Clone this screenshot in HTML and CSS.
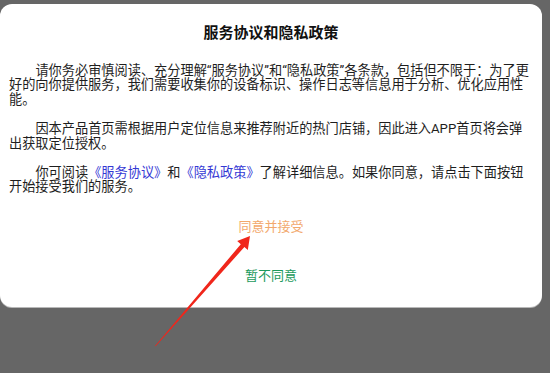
FILE: index.html
```html
<!DOCTYPE html>
<html lang="zh-CN">
<head>
<meta charset="utf-8">
<title>服务协议和隐私政策</title>
<link rel="stylesheet" href="styles.css">
</head>
<body>
<div class="dialog">
  <h1 class="title">服务协议和隐私政策</h1>
  <div class="content">
    <p class="para">请你务必审慎阅读、充分理解“服务协议”和“隐私政策”各条款，包括但不限于：为了更好的向你提供服务，我们需要收集你的设备标识、操作日志等信息用于分析、优化应用性能。</p>
    <p class="para">因本产品首页需根据用户定位信息来推荐附近的热门店铺，因此进入APP首页将会弹出获取定位授权。</p>
    <p class="para"><span>你可阅读</span><a class="link">《服务协议》</a><span>和</span><a class="link">《隐私政策》</a><span>了解详细信息。如果你同意，请点击下面按钮</span><span>开始接受我们的服务。</span></p>
  </div>
  <div class="actions">
    <div class="btn btn-agree">同意并接受</div>
    <div class="btn btn-refuse">暂不同意</div>
  </div>
</div>
<svg class="annotation" width="550" height="373" viewBox="0 0 550 373" aria-hidden="true">
  <polygon points="155,346 240.8,244.2 237.2,241 250,236 247.8,250 244.4,247 155.7,346.3" fill="#f0261b"/>
</svg>
</body>
</html>
```
FILE: styles.css
```css
html, body {
  margin: 0;
  padding: 0;
}
body {
  background: #666666;
  padding-top: 4px;
  width: 550px;
  height: 369px;
  overflow: hidden;
  font-family: "Roboto", "Noto Sans CJK SC", sans-serif;
  color: #1e1e1e;
}
.dialog {
  width: 542px;
  height: 303px;
  box-sizing: border-box;
  background: #ffffff;
  border-radius: 12px;
  padding: 19px 9px 0 9px;
  box-shadow: 0 1px 0 #b8b8b8;
}
.title {
  margin: 0;
  font-size: 15px;
  line-height: 20px;
  font-weight: bold;
  text-align: center;
  color: #111111;
}
.content {
  margin-top: 20.7px;
}
.para {
  margin: 0 0 14.6px 0;
  font-size: 13.2px;
  line-height: 14.6px;
  text-indent: 2em;
}
.para:last-child {
  margin-bottom: 0;
}
.link {
  color: #3438d4;
  text-decoration: none;
}
.actions {
  margin-top: 12.4px;
  display: flex;
  flex-direction: column;
  gap: 8.5px;
}
.btn {
  height: 40px;
  line-height: 40px;
  text-align: center;
  font-size: 13px;
}
.btn-agree {
  color: #f2a86c;
}
.btn-refuse {
  color: #1c9a5c;
}
.annotation {
  position: absolute;
  left: 0;
  top: 0;
  pointer-events: none;
}
```
